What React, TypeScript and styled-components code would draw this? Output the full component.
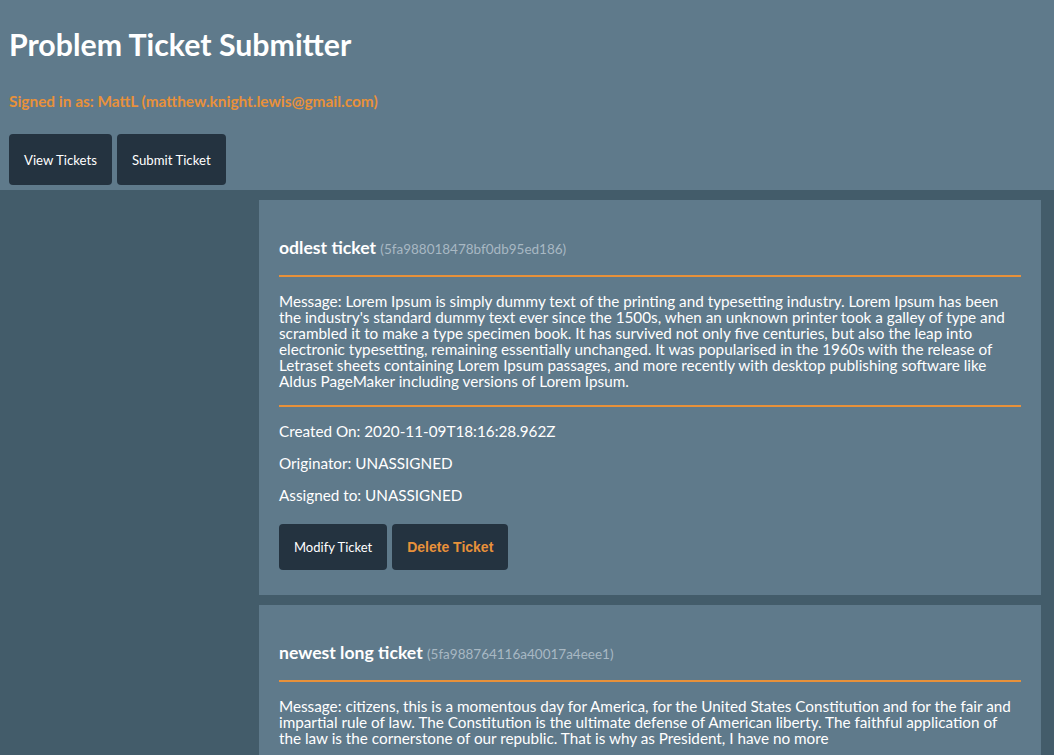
import React from "react";
import styled, { createGlobalStyle } from "styled-components";

const GlobalStyle = createGlobalStyle`
  html, body { margin: 0; padding: 0; }
  body {
    background: #435c6a;
    font-family: Lato, "Open Sans", sans-serif;
    color: #ffffff;
  }
`;

const Header = styled.header`
  background: #5f7a8b;
  padding: 24px 9px 5px;
`;

const Title = styled.h1`
  margin: 0;
  font-size: 30.3px;
  line-height: 40px;
  font-weight: 700;
  color: #ffffff;
`;

const SignedIn = styled.p`
  margin: 27px 0 0;
  font-size: 15.4px;
  line-height: 20px;
  font-weight: 700;
  color: #e8913a;
`;

const Nav = styled.nav`
  display: flex;
  gap: 5px;
  margin-top: 23px;
`;

const Button = styled.button<{ $danger?: boolean; $tall?: boolean }>`
  background: #243340;
  border: none;
  border-radius: 4px;
  color: ${(p) => (p.$danger ? "#e8913a" : "#ffffff")};
  font-family: ${(p) => (p.$danger ? '"Liberation Sans", Arial, sans-serif' : "Lato, sans-serif")};
  font-weight: ${(p) => (p.$danger ? 700 : 400)};
  font-size: ${(p) => (p.$danger ? "14px" : p.$tall ? "13.2px" : "13px")};
  height: ${(p) => (p.$tall ? "51px" : "46px")};
  padding: 0 15px;
  cursor: pointer;
`;

const Main = styled.main`
  display: flex;
  flex-direction: column;
  gap: 10px;
  padding: 10px 13px 10px 259px;
`;

const Card = styled.article`
  background: #5f7a8b;
  padding: 36px 20px 25px;
`;

const CardTitle = styled.h2`
  margin: 0 0 14px;
  font-size: 17.6px;
  line-height: 24px;
  font-weight: 700;
  color: #ffffff;
`;

const TicketId = styled.span`
  font-size: 13.5px;
  font-weight: 400;
  color: #a8b8c3;
`;

const Rule = styled.hr`
  border: none;
  height: 2px;
  background: #e8913a;
  margin: 0;
`;

const Message = styled.p`
  margin: 16px 0;
  font-size: 15.27px;
  line-height: 16px;
`;

const Field = styled.p`
  margin: 16px 0 0;
  font-size: 15.27px;
  line-height: 16px;
`;

const Actions = styled.div`
  display: flex;
  gap: 5px;
  margin-top: 21px;
`;

type Ticket = {
  title: string;
  id: string;
  message: string;
  created: string;
  originator: string;
  assigned: string;
};

const tickets: Ticket[] = [
  {
    title: "odlest ticket",
    id: "5fa988018478bf0db95ed186",
    message:
      "Lorem Ipsum is simply dummy text of the printing and typesetting industry. Lorem Ipsum has been the industry's standard dummy text ever since the 1500s, when an unknown printer took a galley of type and scrambled it to make a type specimen book. It has survived not only five centuries, but also the leap into electronic typesetting, remaining essentially unchanged. It was popularised in the 1960s with the release of Letraset sheets containing Lorem Ipsum passages, and more recently with desktop publishing software like Aldus PageMaker including versions of Lorem Ipsum.",
    created: "2020-11-09T18:16:28.962Z",
    originator: "UNASSIGNED",
    assigned: "UNASSIGNED",
  },
  {
    title: "newest long ticket",
    id: "5fa988764116a40017a4eee1",
    message:
      "citizens, this is a momentous day for America, for the United States Constitution and for the fair and impartial rule of law. The Constitution is the ultimate defense of American liberty. The faithful application of the law is the cornerstone of our republic. That is why as President, I have no more",
    created: "2020-11-09T18:18:28.962Z",
    originator: "UNASSIGNED",
    assigned: "UNASSIGNED",
  },
];

export default function App() {
  return (
    <>
      <GlobalStyle />
      <Header>
        <Title>Problem Ticket Submitter</Title>
        <SignedIn>Signed in as: MattL (matthew.knight.lewis@gmail.com)</SignedIn>
        <Nav>
          <Button $tall>View Tickets</Button>
          <Button $tall>Submit Ticket</Button>
        </Nav>
      </Header>
      <Main>
        {tickets.map((t) => (
          <Card key={t.id}>
            <CardTitle>
              {t.title} <TicketId>({t.id})</TicketId>
            </CardTitle>
            <Rule />
            <Message>Message: {t.message}</Message>
            <Rule />
            <Field>Created On: {t.created}</Field>
            <Field>Originator: {t.originator}</Field>
            <Field>Assigned to: {t.assigned}</Field>
            <Actions>
              <Button>Modify Ticket</Button>
              <Button $danger>Delete Ticket</Button>
            </Actions>
          </Card>
        ))}
      </Main>
    </>
  );
}
